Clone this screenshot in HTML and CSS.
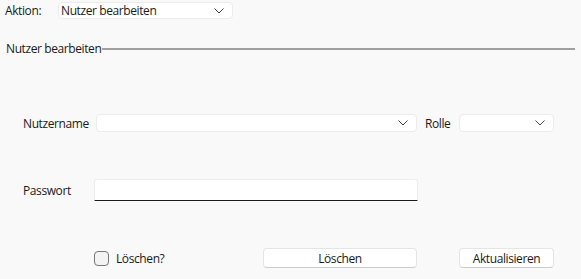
FILE: index.html
```html
<!DOCTYPE html>
<html lang="de">
<head>
    <meta charset="UTF-8">
    <title>Nutzer bearbeiten</title>
    <link rel="stylesheet" href="styles.css">
</head>
<body>
    <div class="action-row">
        <span class="action-label">Aktion:</span>
        <div class="combo action-combo">
            <span>Nutzer bearbeiten</span>
            <svg class="chevron" width="10" height="6" viewBox="0 0 10 6"><polyline points="0.5,0.5 5,5 9.5,0.5" fill="none" stroke="#444" stroke-width="1"/></svg>
        </div>
    </div>

    <div class="group-title">
        <span>Nutzer bearbeiten</span>
        <div class="group-line"></div>
    </div>

    <div class="form">
        <div class="row user-row">
            <span class="label name-label">Nutzername</span>
            <div class="combo user-combo">
                <span></span>
                <svg class="chevron" width="10" height="6" viewBox="0 0 10 6"><polyline points="0.5,0.5 5,5 9.5,0.5" fill="none" stroke="#444" stroke-width="1"/></svg>
            </div>
            <span class="label role-label">Rolle</span>
            <div class="combo role-combo">
                <span></span>
                <svg class="chevron" width="10" height="6" viewBox="0 0 10 6"><polyline points="0.5,0.5 5,5 9.5,0.5" fill="none" stroke="#444" stroke-width="1"/></svg>
            </div>
        </div>

        <div class="row pass-row">
            <span class="label pass-label">Passwort</span>
            <div class="textbox"></div>
        </div>

        <div class="row button-row">
            <label class="check">
                <span class="box"></span>
                <span>Löschen?</span>
            </label>
            <button class="btn delete-btn">Löschen</button>
            <button class="btn update-btn">Aktualisieren</button>
        </div>
    </div>
</body>
</html>
```

FILE: styles.css
```css
body {
    margin: 0;
    background: #f9f9f9;
    font-family: 'Open Sans', 'Noto Sans', sans-serif;
    font-size: 12px;
    letter-spacing: -0.4px;
    color: #1a1a1a;
    width: 581px;
    height: 279px;
    overflow: hidden;
}
.action-row {
    display: flex;
    align-items: center;
    padding: 2px 0 0 5px;
}
.action-label {
    width: 53px;
}
.combo {
    display: flex;
    align-items: center;
    justify-content: space-between;
    box-sizing: border-box;
    height: 18px;
    background: #fff;
    border: 1px solid #ececec;
    border-radius: 4px;
    padding: 0 8px 0 2px;
}
.action-combo {
    width: 175px;
    height: 17px;
}
.chevron {
    flex-shrink: 0;
}
.group-title {
    display: flex;
    align-items: center;
    margin-top: 21px;
    padding: 0 6px;
}
.group-line {
    flex: 1;
    height: 2px;
    background: #a0a0a0;
    margin-left: 1px;
}
.form {
    padding-left: 23px;
}
.row {
    display: flex;
    align-items: center;
}
.user-row {
    margin-top: 57px;
}
.name-label {
    width: 73px;
}
.user-combo {
    width: 321px;
}
.role-label {
    margin-left: 8px;
    width: 34px;
}
.role-combo {
    width: 95px;
}
.pass-row {
    margin-top: 47px;
}
.pass-label {
    width: 71px;
}
.textbox {
    width: 324px;
    height: 22px;
    box-sizing: border-box;
    background: #fff;
    border: 1px solid #ececec;
    border-bottom: 1px solid #1a1a1a;
    border-radius: 3px 3px 0 0;
}
.button-row {
    margin-top: 47px;
}
.check {
    display: flex;
    align-items: center;
    margin-left: 71px;
    width: 169px;
}
.box {
    width: 15px;
    height: 15px;
    box-sizing: border-box;
    border: 1px solid #777;
    border-radius: 4px;
    background: #f3f3f3;
    margin-right: 7px;
}
.btn {
    height: 20px;
    box-sizing: border-box;
    background: #fff;
    border: 1px solid #e5e5e5;
    border-bottom-color: #cccccc;
    border-radius: 4px;
    font-family: inherit;
    font-size: 12px;
    letter-spacing: inherit;
    color: #1a1a1a;
    padding: 0;
}
.delete-btn {
    width: 154px;
}
.update-btn {
    width: 95px;
    margin-left: 42px;
}
```
